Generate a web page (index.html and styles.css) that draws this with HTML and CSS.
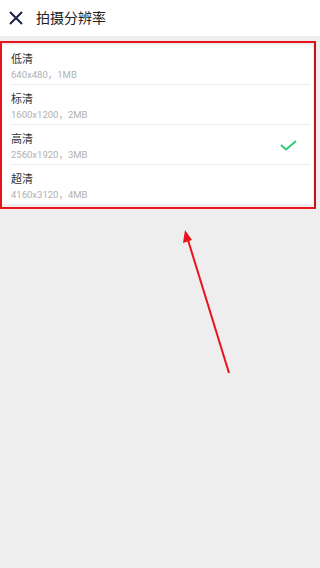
FILE: index.html
```html
<!DOCTYPE html>
<html lang="zh">
<head>
<meta charset="utf-8">
<meta name="viewport" content="width=device-width, initial-scale=1">
<title>拍摄分辨率</title>
<link rel="stylesheet" href="styles.css">
</head>
<body>
<header class="topbar">
  <svg class="close" width="14" height="14" viewBox="0 0 14 14"><path d="M1 1 L13 13 M13 1 L1 13" stroke="#1d2142" stroke-width="2" fill="none"/></svg>
  <h1 class="title">拍摄分辨率</h1>
</header>
<main class="content">
  <ul class="list">
    <li class="row"><div class="name">低清</div><div class="spec">640x480，1MB</div></li>
    <li class="row"><div class="name">标清</div><div class="spec">1600x1200，2MB</div></li>
    <li class="row"><div class="texts"><div class="name">高清</div><div class="spec">2560x1920，3MB</div></div>
      <svg class="check" width="17" height="11" viewBox="0 0 17 11"><path d="M1 5 L6 9.5 L16 1" stroke="#2fc774" stroke-width="1.8" fill="none"/></svg></li>
    <li class="row last"><div class="name">超清</div><div class="spec">4160x3120，4MB</div></li>
  </ul>
</main>
<div class="highlight"></div>
<svg class="arrow" width="320" height="568" viewBox="0 0 320 568">
  <line x1="229" y1="373" x2="188" y2="240" stroke="#e8141b" stroke-width="2"/>
  <polygon points="185,230 183,243 192,240" fill="#e8141b"/>
</svg>
</body>
</html>
```
FILE: styles.css
```css
* { box-sizing: border-box; }
html, body {
  margin: 0;
  padding: 0;
  background: #eeeeee;
  font-family: Roboto, "Noto Sans CJK SC", sans-serif;
}
body {
  position: relative;
  width: 320px;
  height: 568px;
  overflow: hidden;
}
.topbar {
  height: 36px;
  background: #ffffff;
  display: flex;
  align-items: center;
  padding-left: 9px;
  gap: 13px;
}
.close { display: block; }
.title {
  margin: 0;
  font-size: 14px;
  font-weight: 400;
  color: #222222;
  line-height: 20px;
}
.content {
  padding-top: 9px;
}
.list {
  list-style: none;
  margin: 0 0 0 1px;
  padding: 0;
  width: 312px;
  background: #ffffff;
}
.row {
  height: 40px;
  margin-left: 10px;
  margin-right: 3px;
  border-bottom: 1px solid #ebebeb;
  padding-top: 8px;
  display: flex;
  flex-direction: column;
}
.row:nth-child(3) {
  flex-direction: row;
  align-items: flex-start;
  justify-content: space-between;
}
.row.last {
  border-bottom: none;
  height: 39px;
}
.check {
  margin-top: 7px;
  margin-right: 13px;
}
.name {
  font-size: 11px;
  line-height: 14px;
  color: #333333;
}
.spec {
  margin-top: 1px;
  font-size: 9.5px;
  line-height: 13px;
  color: #b0b0b0;
}
.highlight {
  position: absolute;
  left: 0;
  top: 41px;
  width: 316px;
  height: 168px;
  border: 2px solid #e8141b;
  border-right-color: #c4141a;
}
.arrow {
  position: absolute;
  left: 0;
  top: 0;
}
```
